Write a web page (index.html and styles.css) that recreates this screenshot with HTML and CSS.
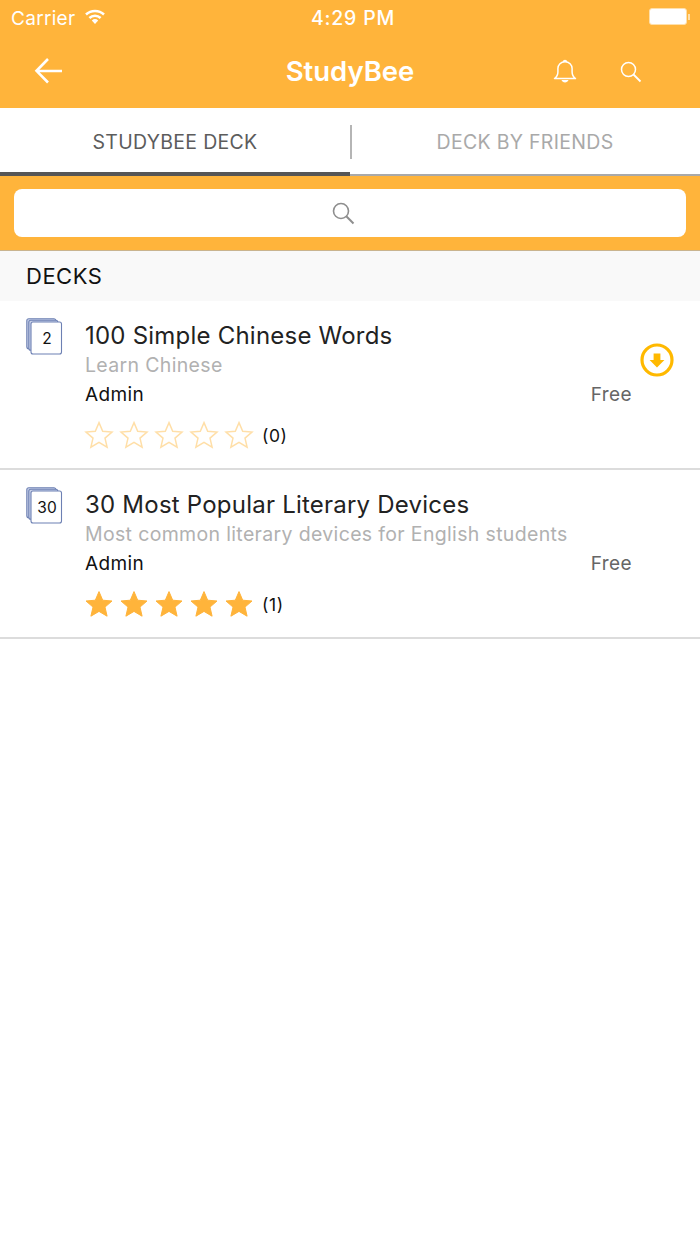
FILE: index.html
```html
<!DOCTYPE html>
<html lang="en">
<head>
<meta charset="utf-8">
<title>StudyBee</title>
<link rel="stylesheet" href="styles.css">
</head>
<body>
<svg class="defs" width="0" height="0" aria-hidden="true">
  <defs>
    <path id="star" d="M14 1.600l3.700 8.600 9.300.8-7 6.100 2.100 9.100-8.100-4.800-8.100 4.800 2.100-9.100-7-6.100 9.300-.8z"/>
    <g id="stack">
      <rect class="layer" x=".8" y=".8" width="29" height="30" rx="2"/>
      <rect class="layer" x="2.800" y="2.300" width="29" height="30" rx="2"/>
      <rect class="face" x="5" y="4" width="30.500" height="32" rx="2"/>
    </g>
  </defs>
</svg>
<header class="top">
  <div class="status">
    <div class="status-left">
      <span>Carrier</span>
      <svg class="wifi" viewBox="0 0 20 15" width="20" height="15"><path d="M1 5.500a13 13 0 0 1 18 0M4.400 9a8 8 0 0 1 11.200 0" fill="none" stroke="#fff" stroke-width="2.500"/><path d="M10 15l-3.200-3.600a4.800 4.800 0 0 1 6.400 0z" fill="#fff"/></svg>
    </div>
    <span class="clock">4:29 PM</span>
    <div class="battery"><span class="battery-body"></span><span class="battery-tip"></span></div>
  </div>
  <nav class="nav">
    <svg class="back" viewBox="0 0 30 26" width="30" height="26"><path d="M28 13H3M14 1 2.500 12.800 14 24.500" fill="none" stroke="#fff" stroke-width="2.600"/></svg>
    <h1 class="brand">StudyBee</h1>
    <svg class="bell" viewBox="0 0 24 26" width="24" height="26"><path d="M1.500 19.500c2.200-1.600 3.400-3.400 3.400-6.600V9.500c0-3.800 3-6.800 7.100-6.800s7.100 3 7.100 6.800v3.400c0 3.200 1.200 5 3.400 6.600zM10.300 2.700a1.800 1.800 0 0 1 3.400 0" fill="none" stroke="#fff" stroke-width="1.500" stroke-linejoin="round"/><path d="M8.500 21h7c-.5 1.600-1.900 2.500-3.500 2.500s-3-.9-3.500-2.500z" fill="#fff"/></svg>
    <svg class="find" viewBox="0 0 22 22" width="22" height="22"><circle cx="8.500" cy="8.500" r="7" fill="none" stroke="#fff" stroke-width="1.500"/><path d="M13.500 13.500l7 7" stroke="#fff" stroke-width="1.800"/></svg>
  </nav>
</header>
<div class="tabs">
  <div class="tab tab-on"><span class="tab-label">STUDYBEE DECK</span></div>
  <div class="tab tab-off"><span class="tab-label">DECK BY FRIENDS</span></div>
</div>
<div class="search-band">
  <div class="search-box">
    <svg viewBox="0 0 23 23" width="23" height="23"><circle cx="9" cy="9" r="7.500" fill="none" stroke="#8e8e8e" stroke-width="1.600"/><path d="M14.300 14.300l7.200 7.200" stroke="#8e8e8e" stroke-width="2"/></svg>
  </div>
</div>
<h2 class="section">DECKS</h2>
<ul class="decks">
  <li class="deck">
    <div class="thumb">
      <svg class="thumb-art" viewBox="0 0 37 37" width="37" height="37"><use href="#stack"/></svg>
      <span class="thumb-num">2</span>
    </div>
    <div class="deck-main">
      <div class="deck-title">100 Simple Chinese Words</div>
      <div class="deck-sub">Learn Chinese</div>
      <div class="deck-meta"><span class="author">Admin</span><span class="price">Free</span></div>
      <div class="rating">
        <svg class="star star-empty" viewBox="0 0 28 28" width="28" height="28"><use href="#star"/></svg>
        <svg class="star star-empty" viewBox="0 0 28 28" width="28" height="28"><use href="#star"/></svg>
        <svg class="star star-empty" viewBox="0 0 28 28" width="28" height="28"><use href="#star"/></svg>
        <svg class="star star-empty" viewBox="0 0 28 28" width="28" height="28"><use href="#star"/></svg>
        <svg class="star star-empty" viewBox="0 0 28 28" width="28" height="28"><use href="#star"/></svg>
        <span class="count">(0)</span>
      </div>
    </div>
    <svg class="download" viewBox="0 0 34 34" width="34" height="34"><circle cx="17" cy="17" r="15" fill="none" stroke="#ffb900" stroke-width="3.200"/><path d="M13.600 10.500h6.800v6.500h4L17 24.500 9.600 17h4z" fill="#ffb900"/></svg>
  </li>
  <li class="deck">
    <div class="thumb">
      <svg class="thumb-art" viewBox="0 0 37 37" width="37" height="37"><use href="#stack"/></svg>
      <span class="thumb-num">30</span>
    </div>
    <div class="deck-main">
      <div class="deck-title">30 Most Popular Literary Devices</div>
      <div class="deck-sub">Most common literary devices for English students</div>
      <div class="deck-meta"><span class="author">Admin</span><span class="price">Free</span></div>
      <div class="rating">
        <svg class="star star-full" viewBox="0 0 28 28" width="28" height="28"><use href="#star"/></svg>
        <svg class="star star-full" viewBox="0 0 28 28" width="28" height="28"><use href="#star"/></svg>
        <svg class="star star-full" viewBox="0 0 28 28" width="28" height="28"><use href="#star"/></svg>
        <svg class="star star-full" viewBox="0 0 28 28" width="28" height="28"><use href="#star"/></svg>
        <svg class="star star-full" viewBox="0 0 28 28" width="28" height="28"><use href="#star"/></svg>
        <span class="count">(1)</span>
      </div>
    </div>
  </li>
</ul>
</body>
</html>
```
FILE: styles.css
```css
* { box-sizing: border-box; }
html, body { margin: 0; padding: 0; }
body { width: 700px; height: 1244px; background: #fff; font-family: Inter, "Liberation Sans", sans-serif; overflow: hidden; }
.defs { display: block; height: 0; }
.top { background: #ffb43b; height: 108px; color: #fff; }
.status { position: relative; height: 40px; display: flex; align-items: center; justify-content: space-between; padding: 0 10px 3px 11px; font-size: 19px; letter-spacing: .3px; }
.status-left { display: flex; align-items: center; gap: 10px; }
.wifi { margin-top: -4px; }
.clock { position: absolute; left: 6px; right: 0; top: 7px; text-align: center; font-weight: 500; font-size: 19.500px; line-height: 22px; letter-spacing: .8px; }
.battery { display: flex; align-items: center; margin-top: -4px; }
.battery-body { width: 38px; height: 17px; background: #fff; border: 1.500px solid #ffe0ab; border-radius: 3px; }
.battery-tip { width: 2px; height: 6px; background: #ffe0ab; margin-left: 1px; }
.nav { position: relative; height: 68px; display: flex; align-items: center; padding: 0 58px 6px 34px; }
.brand { position: absolute; left: 0; right: 0; top: 13px; margin: 0; text-align: center; font-size: 27.500px; line-height: 36px; font-weight: 600; }
.back { flex: none; margin-right: auto; }
.bell { flex: none; margin-right: 43px; margin-top: 2px; }
.find { flex: none; margin-top: 1px; }
.tabs { display: flex; height: 68px; background: #fff; }
.tab { flex: 1; display: flex; align-items: center; justify-content: center; font-size: 19.500px; letter-spacing: .3px; padding-top: 4px; }
.tab-on { color: #5c5c5c; border-bottom: 4px solid #565656; }
.tab-off { color: #a9a9a9; border-bottom: 2px solid #a9a9a9; padding-bottom: 2px; position: relative; }
.tab-off::before { content: ""; position: absolute; left: 0; top: 17px; height: 34px; width: 2px; background: #b5b5b5; }
.search-band { height: 75px; background: #ffb43b; border-bottom: 1px solid #c9b48f; padding: 13px 14px 0; }
.search-box { height: 48px; background: #fff; border-radius: 8px; display: flex; align-items: center; justify-content: center; padding-right: 14px; }
.section { margin: 0; height: 50px; background: #f9f9f9; padding-left: 26px; font-size: 22px; line-height: 50px; font-weight: 400; color: #111; letter-spacing: .5px; }
.decks { list-style: none; margin: 0; padding: 0; }
.deck { position: relative; height: 169px; border-bottom: 2px solid #dcdcdc; display: flex; padding: 18px 0 0 26px; }
.thumb { position: relative; width: 36px; height: 36px; flex: none; margin: -1px 23px 0 0; }
.thumb-art { display: block; stroke: #6d80b3; stroke-width: 1.100; overflow: visible; }
.layer { fill: #c9d2ea; }
.face { fill: #fff; }
.thumb-num { position: absolute; left: 6px; right: 0; top: 5px; height: 31px; display: flex; align-items: center; justify-content: center; font-size: 15.500px; color: #111; }
.deck-main { width: 547px; flex: none; }
.deck-title { font-size: 24px; line-height: 34px; color: #222; letter-spacing: .22px; }
.deck-sub { font-size: 19.500px; line-height: 26px; color: #b1b1b1; margin-top: -1px; letter-spacing: .34px; }
.deck-meta { display: flex; justify-content: space-between; font-size: 19px; line-height: 30px; margin-top: 2px; color: #111; letter-spacing: .4px; }
.price { color: #666; }
.rating { display: flex; align-items: center; gap: 7px; margin-top: 10px; height: 30px; }
.star { flex: none; overflow: visible; }
.star-empty { fill: none; stroke: #ffdfa8; stroke-width: 1.500; }
.star-full { fill: #ffb43b; stroke: #ffb43b; stroke-width: 1; }
.count { margin-left: 2px; font-size: 17.500px; color: #111; letter-spacing: .6px; padding-top: 1px; }
.download { position: absolute; left: 640px; top: 42px; }
```
